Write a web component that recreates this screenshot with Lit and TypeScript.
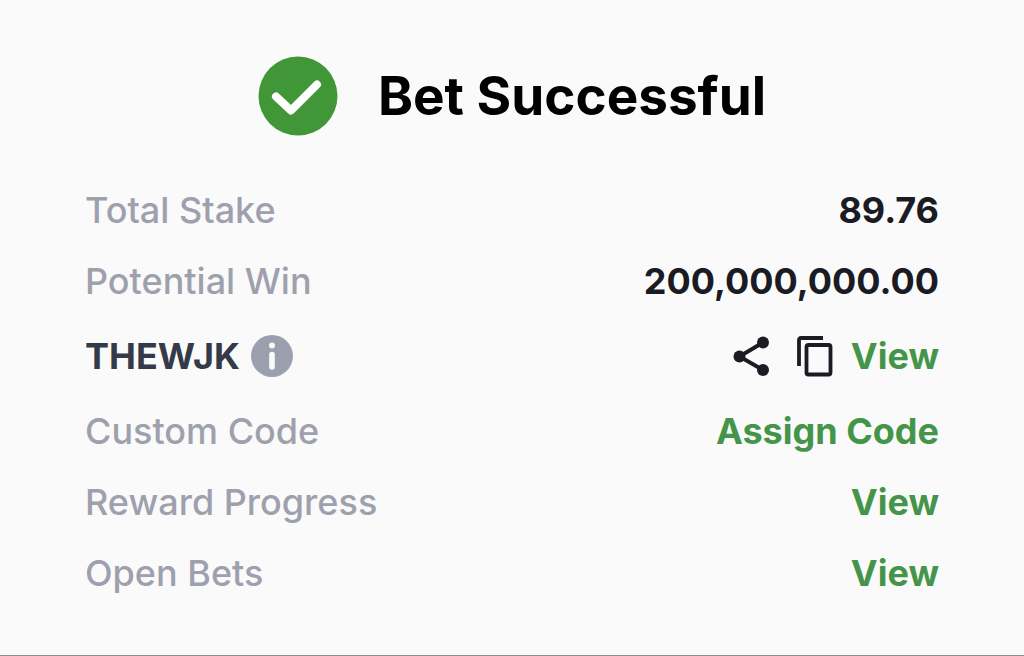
import { LitElement, html, css } from "lit";
import { customElement } from "lit/decorators.js";

@customElement("app-root")
export class AppRoot extends LitElement {
  static styles = css`
    :host {
      display: block;
      box-sizing: border-box;
      min-height: 100vh;
      background: #fafafa;
      border-bottom: 1px solid #8e8e8e;
      font-family: Inter, "Liberation Sans", sans-serif;
      color: #1b1b23;
    }
    .receipt {
      padding: 56px 85px 0 85px;
    }
    .title {
      display: flex;
      align-items: center;
      justify-content: center;
      gap: 40px;
      margin-bottom: 38px;
    }
    .title svg { width: 80px; height: 80px; flex: none; }
    h1 {
      margin: 0;
      font-size: 53px;
      line-height: 66px;
      font-weight: 700;
      color: #000;
    }
    dl { margin: 0; }
    .row {
      display: flex;
      align-items: center;
      justify-content: space-between;
      min-height: 71px;
      font-size: 36px;
      line-height: 44px;
    }
    .row.code { min-height: 79px; }
    dt { display: flex; align-items: center; gap: 11px; color: #9ea1ad; font-weight: 500; }
    dd { display: flex; align-items: center; margin: 0; font-weight: 700; }
    .code dt { color: #353a48; font-weight: 700; }
    a { color: #449549; text-decoration: none; }
    button {
      display: flex;
      padding: 0;
      border: 0;
      background: none;
      color: inherit;
      cursor: pointer;
    }
    .info svg { width: 42px; height: 42px; }
    .share svg { width: 36px; height: 40px; }
    .share { margin-right: 28px; }
    .copy svg { width: 36px; height: 42px; }
    .copy { margin-right: 18px; }
  `;

  private row(label: string, value: unknown) {
    return html`<div class="row"><dt>${label}</dt><dd>${value}</dd></div>`;
  }

  render() {
    return html`
      <main class="receipt">
        <header class="title">
          <svg viewBox="0 0 80 80" aria-hidden="true">
            <circle cx="40" cy="40" r="39.5" fill="#419638" />
            <path d="M18 40.5 L33 54.5 L59 28.5" fill="none" stroke="#fff" stroke-width="8" stroke-linecap="round" stroke-linejoin="round" />
          </svg>
          <h1>Bet Successful</h1>
        </header>
        <dl>
          ${this.row("Total Stake", "89.76")}
          ${this.row("Potential Win", "200,000,000.00")}
          <div class="row code">
            <dt>
              THEWJK
              <button class="info" aria-label="Code information">
                <svg viewBox="0 0 42 42"><circle cx="21" cy="21" r="21" fill="#9ca0ae" /><circle cx="21" cy="10.5" r="3" fill="#fafafa" /><path d="M21 19.5V32" fill="none" stroke="#fafafa" stroke-width="5.6" stroke-linecap="round" /></svg>
              </button>
            </dt>
            <dd>
              <button class="share" aria-label="Share">
                <svg viewBox="0 0 36 40"><path d="M30 6.5 L6.5 20.5 L30 34" fill="none" stroke="currentColor" stroke-width="4" /><g fill="currentColor"><circle cx="30" cy="6.5" r="6" /><circle cx="6.5" cy="20.5" r="6" /><circle cx="30" cy="34" r="6" /></g></svg>
              </button>
              <button class="copy" aria-label="Copy code">
                <svg viewBox="0 0 36 42"><path d="M2 31V5Q2 3 4 3H26" fill="none" stroke="currentColor" stroke-width="3.8" /><rect x="9.5" y="10" width="24" height="29.5" rx="2" fill="none" stroke="currentColor" stroke-width="3.8" /></svg>
              </button>
              <a href="#code">View</a>
            </dd>
          </div>
          ${this.row("Custom Code", html`<a href="#assign">Assign Code</a>`)}
          ${this.row("Reward Progress", html`<a href="#rewards">View</a>`)}
          ${this.row("Open Bets", html`<a href="#bets">View</a>`)}
        </dl>
      </main>
    `;
  }
}
